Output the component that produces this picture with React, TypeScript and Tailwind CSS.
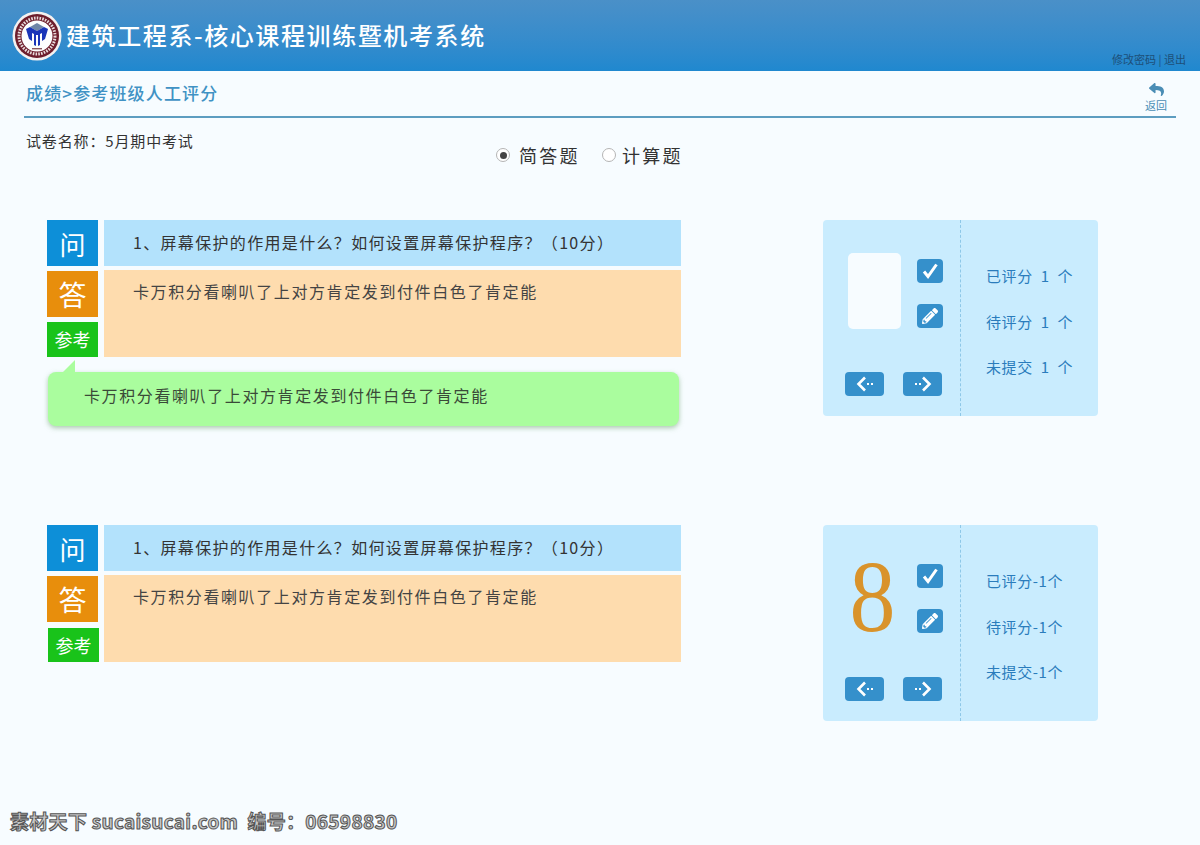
import { FaPencilAlt, FaReply } from 'react-icons/fa';

const CJK = 'font-["Noto_Sans_CJK_SC","Liberation_Sans",sans-serif]';

function Logo() {
    return (
        <svg width="50" height="50" viewBox="0 0 50 50" className="shrink-0">
            <circle cx="25" cy="25" r="24.5" fill="#f4f1f0" />
            <circle cx="25" cy="25" r="22" fill="#6d1d2c" />
            <circle cx="25" cy="25" r="18" fill="none" stroke="#e9dcdc" strokeWidth="3" strokeDasharray="1.6 1.2" />
            <circle cx="25" cy="25" r="15.5" fill="#fdfdfd" />
            <path d="M25 12 L32 16 L25 20 L18 16 Z" fill="#6f86a6" />
            <path d="M14 18 L18 16 L25 20 L32 16 L36 18 L33 28 L30 30 L30 22 L28 23 L28 34 L26 35 L26 24 L24 24 L24 35 L22 34 L22 23 L20 22 L20 30 L17 28 Z" fill="#1a35b8" />
            <rect x="20" y="37" width="10" height="1.4" fill="#8a5a60" />
        </svg>
    );
}

function ArrowIcon({ flip }: { flip?: boolean }) {
    return (
        <svg width="20" height="18" viewBox="0 0 20 18" className={flip ? 'rotate-180' : ''}>
            <path d="M10 2.5 L3.5 9 L10 15.5" fill="none" stroke="white" strokeWidth="2.6" />
            <rect x="12" y="8" width="2" height="2" fill="white" />
            <rect x="16" y="8" width="2" height="2" fill="white" />
        </svg>
    );
}

function Radio({ checked, label, gap }: { checked?: boolean; label: string; gap: string }) {
    return (
        <div className={`flex items-center ${gap}`}>
            <span className="flex h-[14px] w-[14px] items-center justify-center rounded-full border border-[#b5b5b5] bg-white">
                {checked && <span className="h-[7px] w-[7px] rounded-full bg-[#444]" />}
            </span>
            <span className="text-[18px] leading-[24px] tracking-[2.3px] text-[#333]">{label}</span>
        </div>
    );
}

function ScorePanel({ score, stats }: { score?: string; stats: string[] }) {
    return (
        <div className="ml-[142px] flex h-[196px] w-[275px] rounded-[4px] bg-[#c9ecfe]">
            <div className="w-[138px] border-r border-dashed border-[#8ec8e8] pt-[33px] pl-[22px]">
                <div className="flex h-[76px] items-start gap-[16px] pl-[3px]">
                    {score ? (
                        <div className="mt-px flex h-[76px] w-[53px] items-center justify-center pr-[5px] font-['Liberation_Serif',serif] text-[102px] leading-none font-thin text-[#d9932b]">
                            <span className="inline-block scale-x-90">{score}</span>
                        </div>
                    ) : (
                        <div className="h-[76px] w-[53px] rounded-[5px] bg-[#f7fcff]" />
                    )}
                    <div className="flex flex-col gap-[21px] pt-[6px]">
                        <div className="flex h-[24px] w-[26px] items-center justify-center rounded-[4px] bg-[#3590cb]">
                            <svg width="20" height="20" viewBox="0 0 20 20">
                                <path d="M4 10.5 L8 15.5 L16.5 3.5" fill="none" stroke="white" strokeWidth="3" />
                            </svg>
                        </div>
                        <div className="flex h-[24px] w-[26px] items-center justify-center rounded-[4px] bg-[#3590cb] text-[16px] text-white">
                            <FaPencilAlt />
                        </div>
                    </div>
                </div>
                <div className="mt-[43px] flex gap-[19px]">
                    <div className="flex h-[24px] w-[39px] items-center justify-center rounded-[4px] bg-[#3590cb]">
                        <ArrowIcon />
                    </div>
                    <div className="flex h-[24px] w-[39px] items-center justify-center rounded-[4px] bg-[#3590cb]">
                        <ArrowIcon flip />
                    </div>
                </div>
            </div>
            <div className="flex flex-col gap-[23.5px] pt-[45px] pl-[25px]">
                {stats.map((s) => (
                    <div key={s} className="whitespace-pre text-[15px] leading-[22px] tracking-[0.6px] text-[#2a7cbc]">
                        {s}
                    </div>
                ))}
            </div>
        </div>
    );
}

function QuestionBlock({ showRef, score, stats }: { showRef?: boolean; score?: string; stats: string[] }) {
    return (
        <div className="flex items-start">
            <div className="w-[634px]">
                <div className="flex gap-[6px]">
                    <div className="flex w-[51px] flex-col">
                        <div className="flex h-[46px] items-center justify-center bg-[#0d8fd8] text-[26px] text-white">问</div>
                        <div className="mt-[5px] flex h-[46px] items-center justify-center bg-[#e88e0c] text-[28px] text-white">答</div>
                        <div
                            className={
                                showRef
                                    ? 'mt-[5px] flex h-[35px] items-center justify-center bg-[#19c31a] text-[18px] text-white'
                                    : 'mt-[6px] ml-px flex h-[34px] w-[51px] items-center justify-center bg-[#19c31a] text-[18px] text-white'
                            }
                        >
                            参考
                        </div>
                    </div>
                    <div className="flex w-[577px] flex-col gap-[4px]">
                        <div className="flex h-[46px] items-center bg-[#b3e2fc] pb-[2px] pl-[29px] text-[16px] tracking-[1.33px] text-[#333]">
                            1、屏幕保护的作用是什么？如何设置屏幕保护程序？（10分）
                        </div>
                        <div className="h-[87px] bg-[#fedcae] pt-[9px] pl-[29px] text-[16px] leading-[24px] tracking-[1.6px] text-[#444]">
                            卡万积分看喇叭了上对方肯定发到付件白色了肯定能
                        </div>
                    </div>
                </div>
                {showRef && (
                    <div className="relative mt-[15px] ml-px flex h-[54px] w-[631px] items-center rounded-[8px] bg-[#aafd9e] pb-[8px] pl-[36px] text-[16px] tracking-[1.6px] text-[#3a4a38] shadow-[0_2px_5px_rgba(110,160,110,0.55)]">
                        <span className="absolute -top-[12px] left-[14px] h-[13px] w-[13px] bg-[#aafd9e] [clip-path:polygon(100%_0,100%_100%,0_100%)]" />
                        卡万积分看喇叭了上对方肯定发到付件白色了肯定能
                    </div>
                )}
            </div>
            <ScorePanel score={score} stats={stats} />
        </div>
    );
}

export default function App() {
    return (
        <div className={`relative h-[845px] w-[1200px] overflow-hidden bg-[#f7fcff] ${CJK}`}>
            {/* 顶部 */}
            <header className="relative flex h-[71px] items-center gap-[4px] bg-linear-to-b from-[#4a90c8] to-[#1f88cf] pl-[12px]">
                <Logo />
                <h1 className="pb-[2px] text-[24px] font-medium tracking-[1.6px] text-white">建筑工程系-核心课程训练暨机考系统</h1>
                <div className="absolute right-[14px] bottom-[5px] text-[11px] leading-[14px] text-[#1d4f78]">修改密码 | 退出</div>
            </header>

            {/* 面包屑 */}
            <div className="mx-[24px] flex h-[47px] items-center justify-between border-b-2 border-[#5d9dc0] pl-[2px]">
                <div className="pb-[2px] text-[17px] font-medium tracking-[1.15px] text-[#4092c4]">成绩&gt;参考班级人工评分</div>
                <div className="flex w-[40px] flex-col items-center pt-[8px] text-[#4a8db5]">
                    <FaReply className="text-[15px]" />
                    <span className="text-[11px] leading-[16px]">返回</span>
                </div>
            </div>

            <div className="flex h-[102px] pl-[26px]">
                <div className="w-[167px] pt-[13px] text-[15px] leading-[20px] tracking-[0.85px] whitespace-nowrap text-[#333]">试卷名称：5月期中考试</div>
                <div className="ml-[303px] flex items-start gap-[22px] pt-[25px]">
                    <Radio checked label="简答题" gap="gap-[9px]" />
                    <Radio label="计算题" gap="gap-[6px]" />
                </div>
            </div>

            <main className="flex flex-col gap-[99px] pl-[47px]">
                <QuestionBlock showRef stats={['已评分  1  个', '待评分  1  个', '未提交  1  个']} />
                <QuestionBlock score="8" stats={['已评分-1个', '待评分-1个', '未提交-1个']} />
            </main>

            {/* 水印 */}
            <div className="absolute bottom-[10px] left-[10px] text-[19px] leading-[28px] font-bold tracking-[0.3px] whitespace-pre text-[#c8c8c8] [-webkit-text-stroke:1px_#555]">
                素材天下 sucaisucai.com  编号：06598830
            </div>
        </div>
    );
}
